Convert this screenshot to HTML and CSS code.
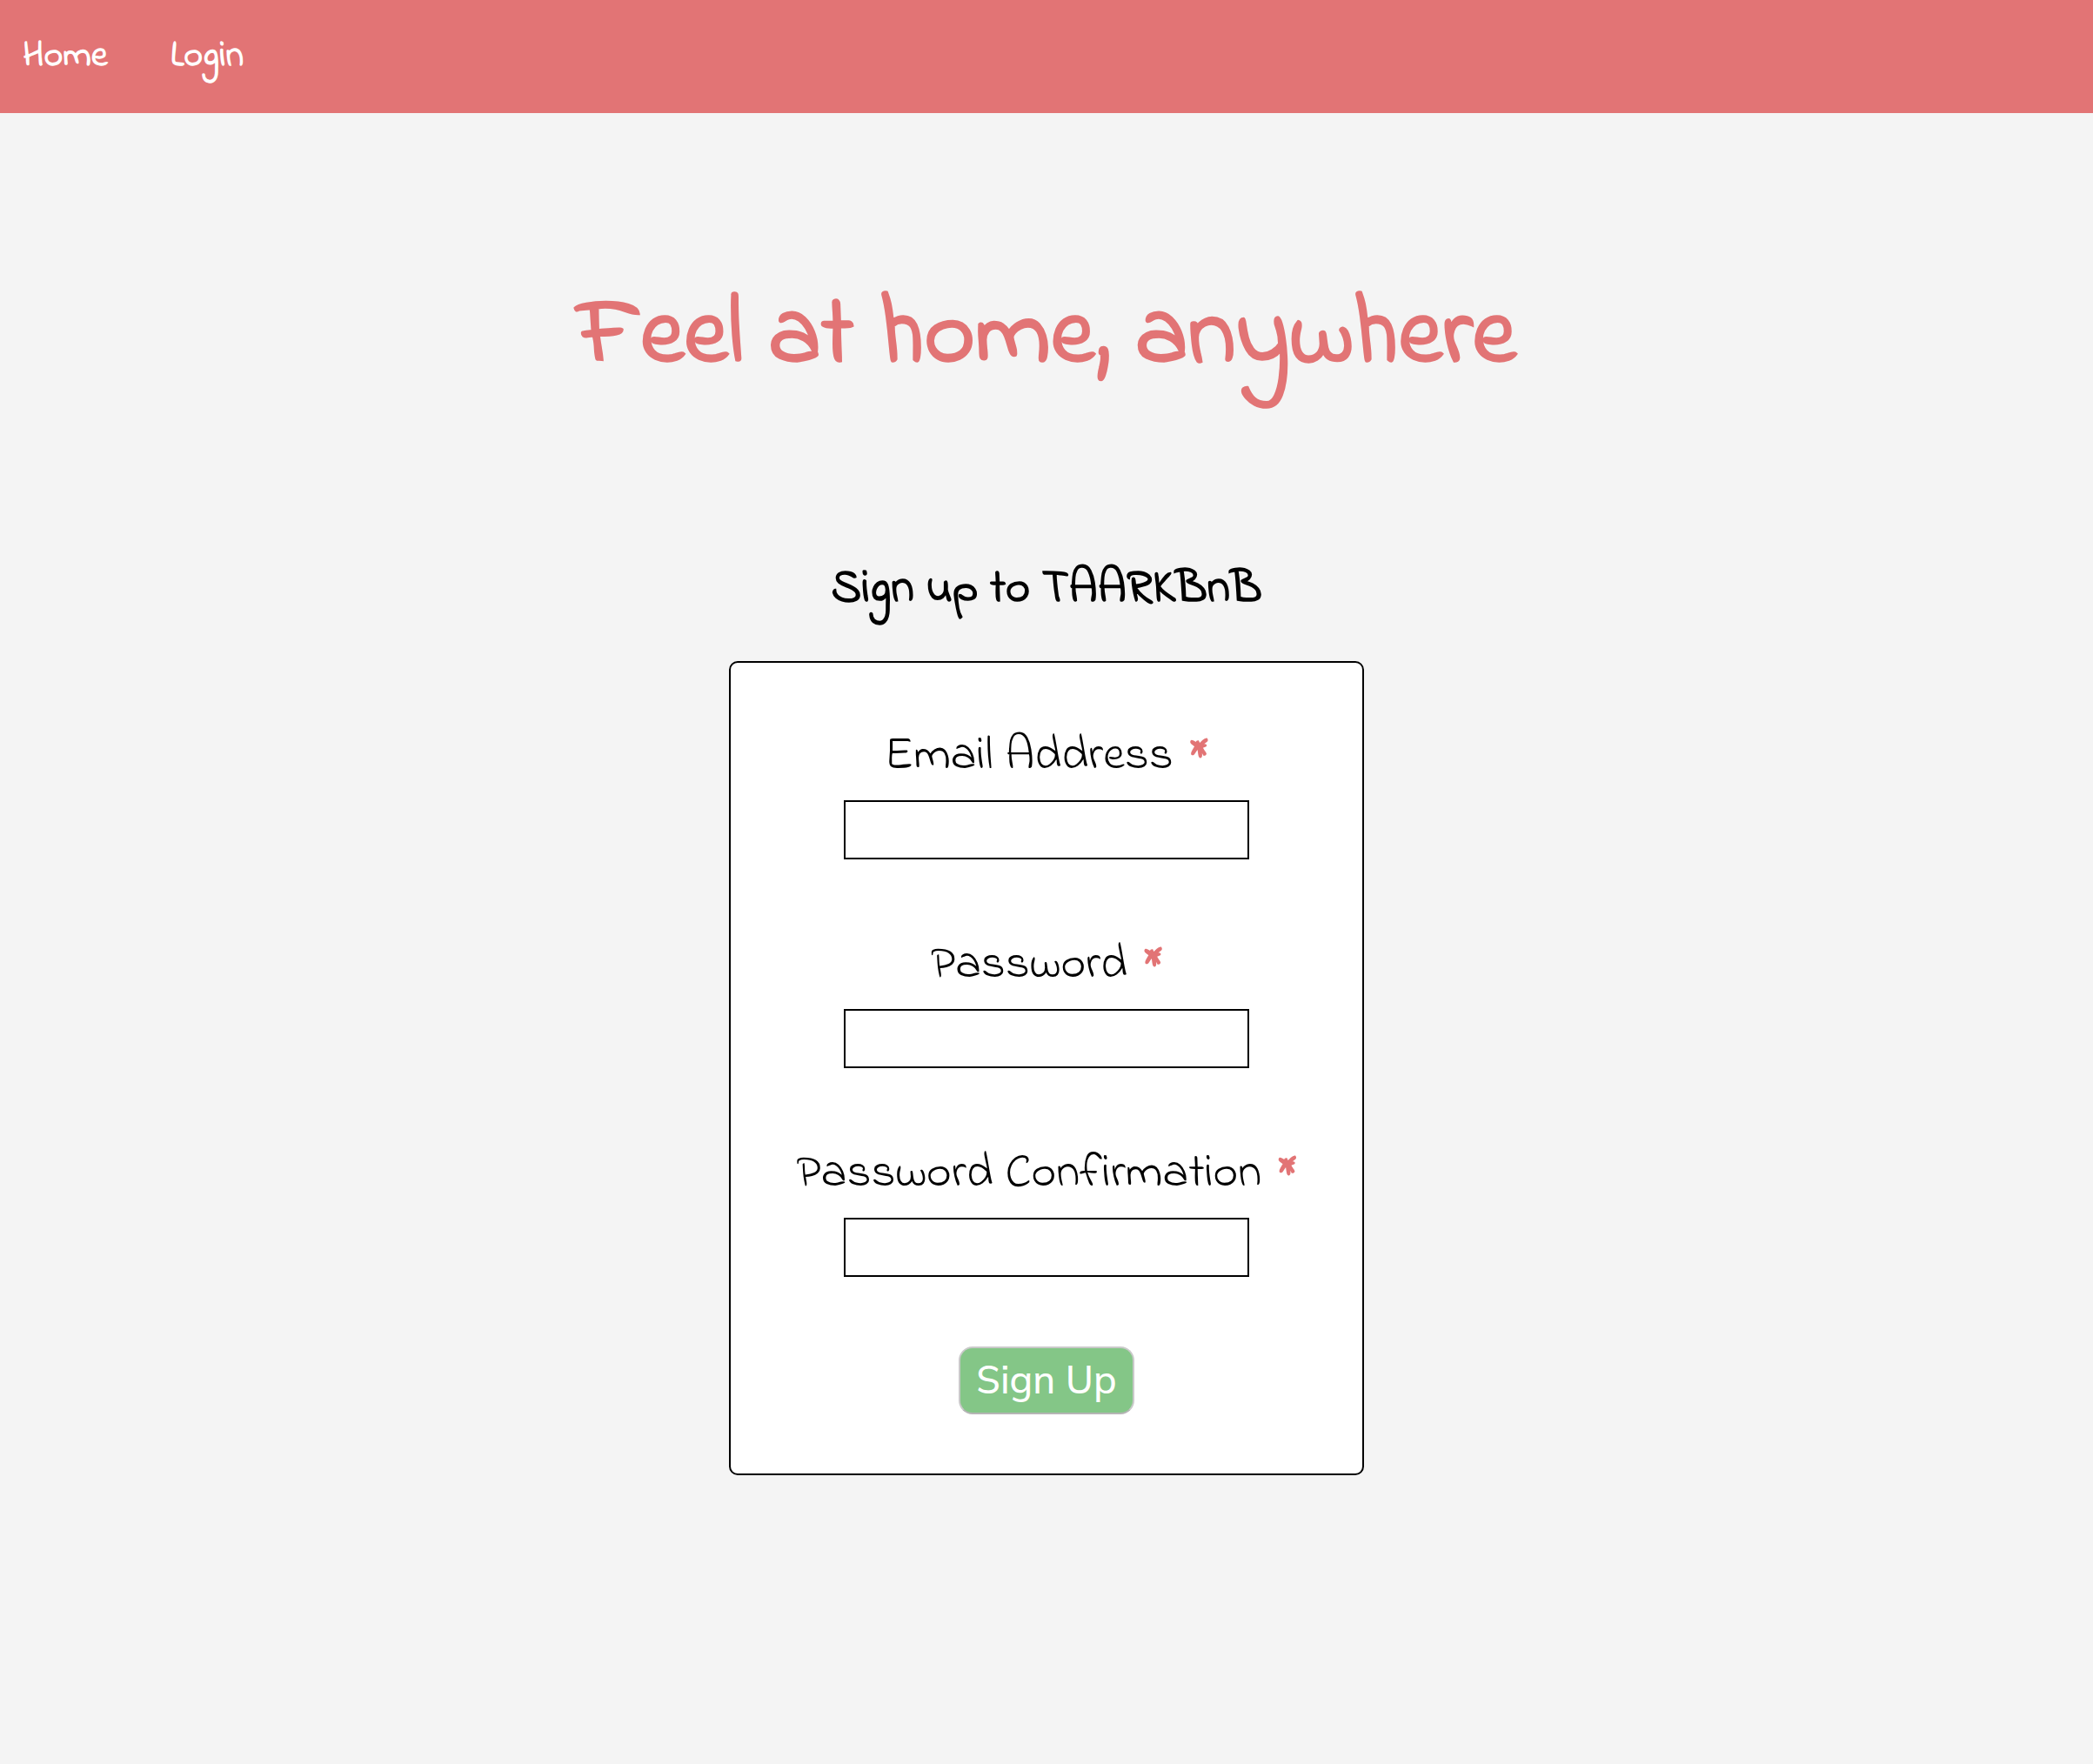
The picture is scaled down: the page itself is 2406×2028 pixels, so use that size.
FILE: index.html
```html
<!DOCTYPE html>
<html lang="en">
<head>
  <meta charset="utf-8">
  <meta name="viewport" content="width=device-width, initial-scale=1">
  <title>TAARKBnB</title>
  <link rel="stylesheet" href="styles.css">
</head>
<body>
  <nav class="navbar">
    <a class="nav-link" href="#home">Home</a>
    <a class="nav-link" href="#login">Login</a>
  </nav>
  <main class="page">
    <h1 class="tagline">Feel at home, anywhere</h1>
    <h2 class="form-title">Sign up to TAARKBnB</h2>
    <form class="card">
      <div class="field">
        <label class="label" for="email">Email Address <span class="required">*</span></label>
        <input class="input" id="email" type="email" required>
      </div>
      <div class="field">
        <label class="label" for="password">Password <span class="required">*</span></label>
        <input class="input" id="password" type="password" required>
      </div>
      <div class="field">
        <label class="label" for="confirmation">Password Confirmation <span class="required">*</span></label>
        <input class="input" id="confirmation" type="password" required>
      </div>
      <button class="submit" type="submit">Sign Up</button>
    </form>
  </main>
</body>
</html>
```

FILE: styles.css
```css
* {
  box-sizing: border-box;
}

body {
  margin: 0;
  min-height: 100vh;
  background: #f4f4f4;
  color: #000;
  font-family: "Indie Flower", Lato, sans-serif;
  font-variant-ligatures: none;
}

.navbar {
  display: flex;
  gap: 72px;
  padding: 35px 26px;
  background: #e27475;
}

.nav-link {
  color: #fff;
  font-size: 42px;
  font-weight: 700;
  line-height: 60px;
  text-decoration: none;
}

.page {
  display: flex;
  flex-direction: column;
  align-items: center;
  padding: 186px 24px 64px;
}

.tagline {
  margin: 0;
  color: #e27475;
  font-size: 112px;
  font-weight: 700;
  line-height: 144px;
  text-align: center;
}

.form-title {
  margin: 184px 0 48px;
  font-size: 54px;
  font-weight: 700;
  line-height: 68px;
}

.card {
  display: flex;
  flex-direction: column;
  align-items: center;
  gap: 80px;
  width: 100%;
  max-width: 730px;
  padding: 66px 24px 68px;
  border: 2px solid #000;
  border-radius: 10px;
  background: #fff;
}

.field {
  display: flex;
  flex-direction: column;
  align-items: center;
  gap: 8px;
  width: 100%;
}

.label {
  font-size: 55px;
  line-height: 84px;
  text-align: center;
}

.required {
  margin-left: 4px;
  color: #e27475;
  font-weight: 700;
}

.input {
  width: 100%;
  max-width: 466px;
  height: 68px;
  padding: 4px 12px;
  border: 2px solid #000;
  border-radius: 0;
  background: #fff;
  font: inherit;
  font-size: 32px;
}

.submit {
  padding: 5px 18px 7px;
  border: 2px solid #c9c9c9;
  border-bottom-color: #b5b5b5;
  border-radius: 16px;
  background: #84c687;
  color: #fff;
  font-family: Mulish, Lato, sans-serif;
  font-size: 44px;
  font-weight: 500;
  line-height: 62px;
}
```
